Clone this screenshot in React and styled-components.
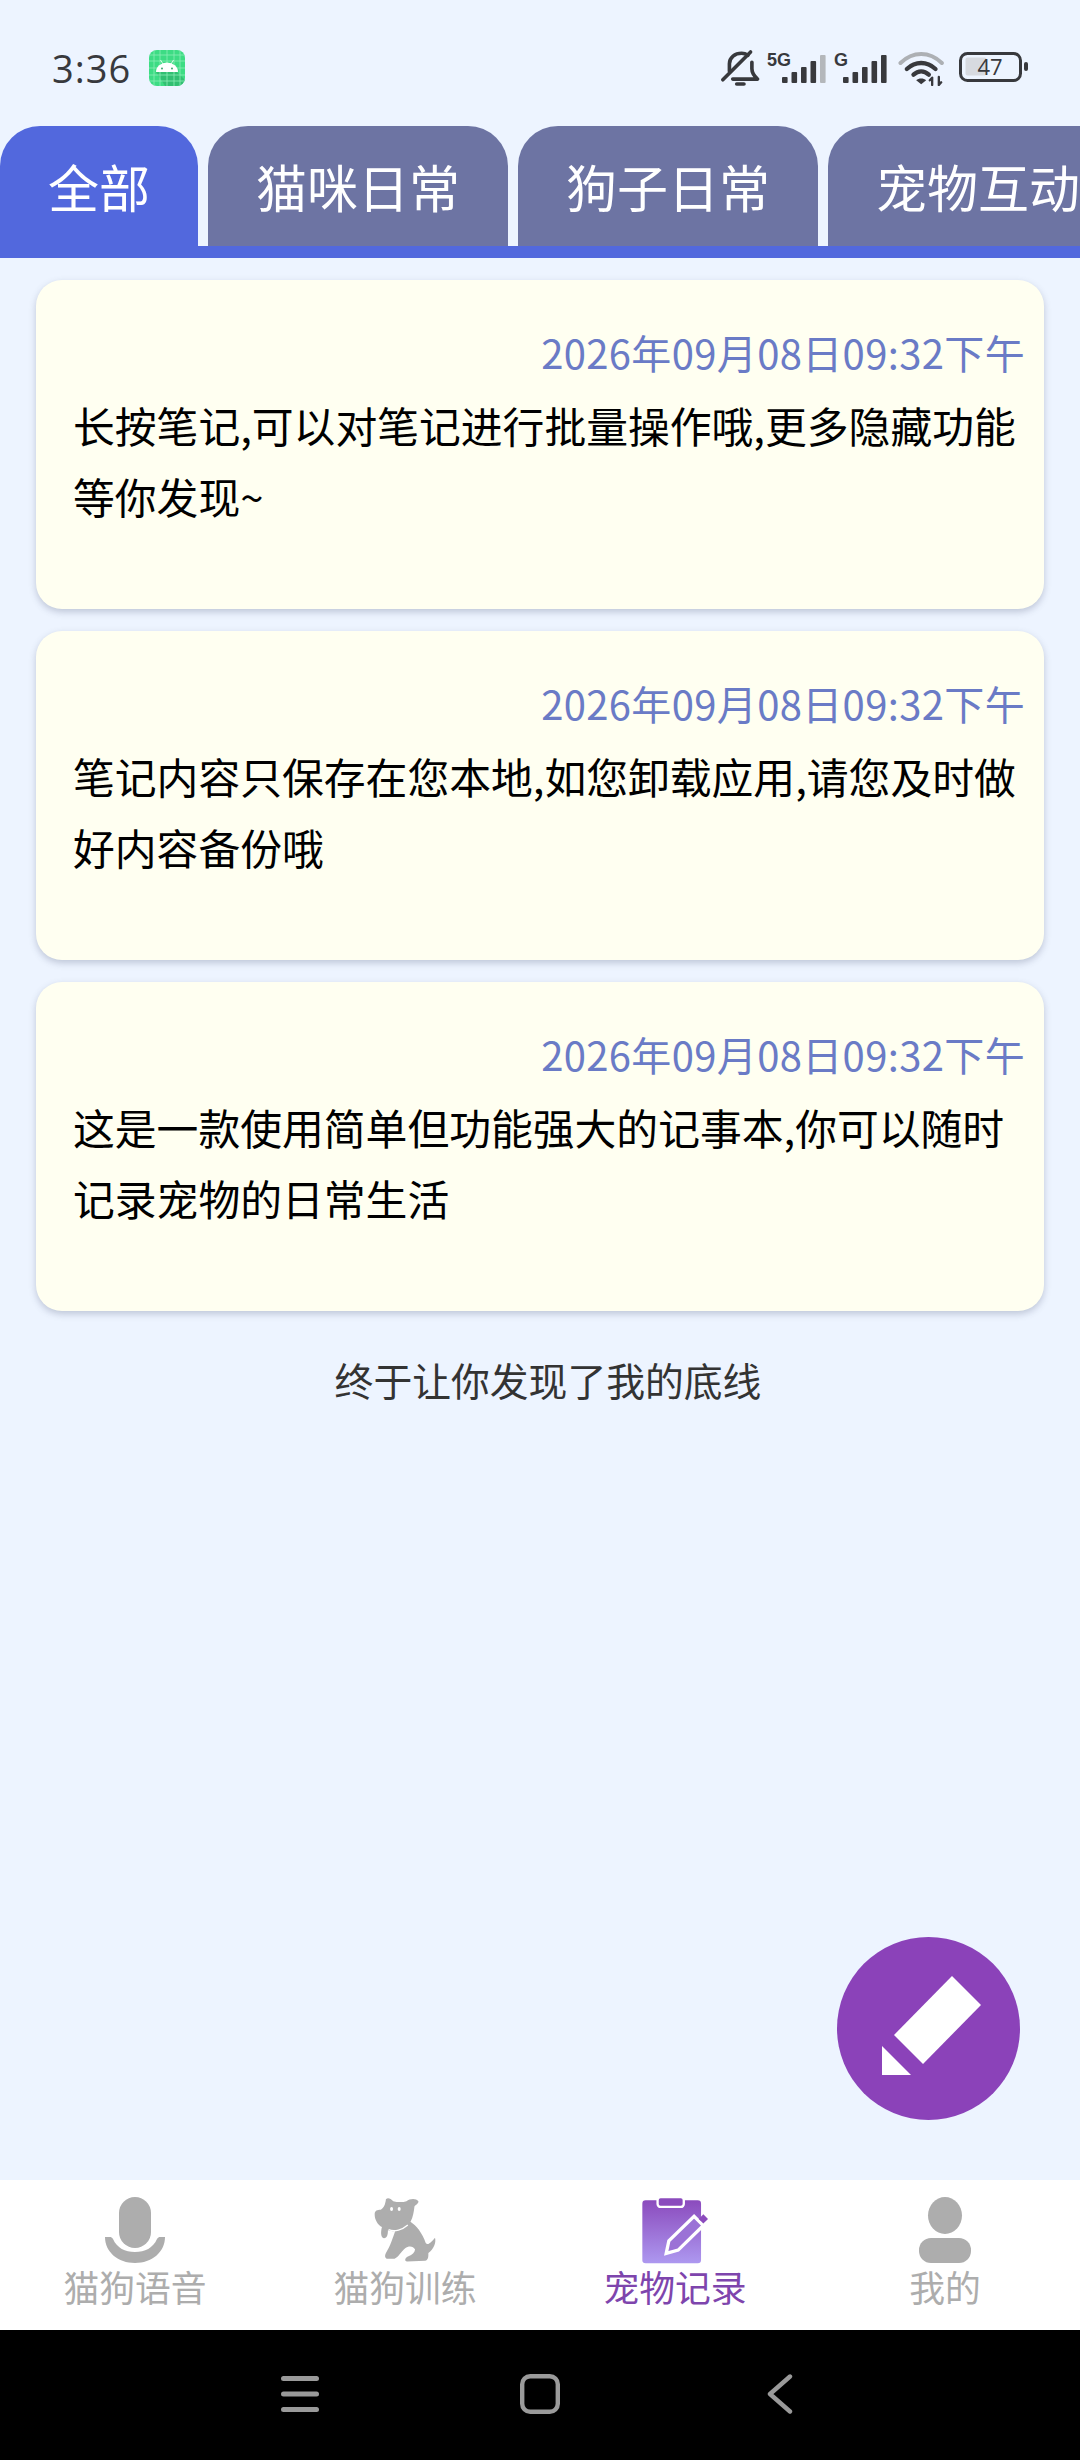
import React from 'react';
import styled, {createGlobalStyle} from 'styled-components';

const GlobalStyle = createGlobalStyle`
    html, body {
        margin: 0;
        padding: 0;
        background: #edf4ff;
    }
    * {
        box-sizing: border-box;
    }
`;

const Screen = styled.div`
    position: relative;
    width: 1080px;
    height: 2460px;
    display: flex;
    flex-direction: column;
    overflow: hidden;
    background: #edf4ff;
    font-family: "Noto Sans CJK SC", "Noto Sans", sans-serif;
`;

// status bar
const StatusBar = styled.div`
    height: 126px;
    flex: none;
    display: flex;
    align-items: center;
    justify-content: space-between;
    padding: 10px 51px 0 52px;
`;
const StatusLeft = styled.div`
    display: flex;
    align-items: center;
    gap: 18px;
`;
const Clock = styled.span`
    font-family: "Open Sans", sans-serif;
    font-size: 38px;
    font-weight: 500;
    line-height: 40px;
    color: #38393d;
    letter-spacing: 1px;
`;
const StatusRight = styled.div`
    display: flex;
    align-items: center;
    gap: 7px;
`;
const WifiSlot = styled.div`
    display: flex;
    margin: 0 7px 0 3px;
`;

// tabs
const TabStrip = styled.div`
    height: 132px;
    flex: none;
    display: flex;
    gap: 10px;
    overflow: hidden;
    border-bottom: 12px solid #5268dd;
`;
const Tab = styled.div`
    flex: none;
    width: ${props => props.$active ? '198px' : '300px'};
    height: 120px;
    display: flex;
    align-items: center;
    justify-content: center;
    border-radius: 40px 40px 0 0;
    font-size: 51px;
    color: #fff;
    white-space: nowrap;
    background: ${props => props.$active ? '#5268dd' : '#6d74a3'};
`;

// note list
const Content = styled.div`
    flex: 1;
    padding: 22px 36px 0;
    display: flex;
    flex-direction: column;
    gap: 22px;
`;
const NoteCard = styled.div`
    height: 329px;
    padding: 47px 19px 0 37px;
    background: #fffff1;
    border-radius: 26px;
    box-shadow: 0 3px 7px rgba(70, 80, 110, 0.28);
`;
const NoteDate = styled.div`
    text-align: right;
    font-size: 40px;
    line-height: 50px;
    letter-spacing: 0.35px;
    color: #6a7bc6;
    white-space: nowrap;
`;
const NoteText = styled.div`
    margin-top: 13px;
    font-size: 41.8px;
    line-height: 71px;
    color: #000;
`;
const EndLine = styled.div`
    padding: 11px 0 0 16px;
    text-align: center;
    font-size: 38.8px;
    line-height: 70px;
    color: #333;
`;

const Fab = styled.div`
    position: absolute;
    left: 837px;
    top: 1937px;
    width: 183px;
    height: 183px;
    border-radius: 50%;
    background: #8b42b9;
    display: flex;
`;

// bottom navigation
const BottomNav = styled.div`
    height: 150px;
    flex: none;
    display: grid;
    grid-template-columns: repeat(4, 1fr);
    background: #fff;
`;
const NavItem = styled.div`
    display: flex;
    flex-direction: column;
    align-items: center;
    padding-top: 16px;
`;
const NavIcon = styled.div`
    height: 68px;
    display: flex;
    align-items: center;
    justify-content: center;
`;
const NavLabel = styled.div`
    margin-top: 1px;
    font-size: 35.8px;
    line-height: 42px;
    color: ${props => props.$active ? '#7e45ad' : '#adadad'};
`;

const SystemBar = styled.div`
    height: 130px;
    flex: none;
    background: #000;
    display: flex;
    align-items: center;
    padding: 0 0 3px 281px;
    gap: 201px;
`;

const BellOff = () => (
    <svg width="40" height="38" viewBox="20 15 120 115" fill="none" stroke="#38393d" strokeWidth="11" strokeLinecap="round" strokeLinejoin="round">
        <path d="M48 82V60C48 40 65 28 85 28C92 28 98 30 104 34" />
        <path d="M116 55V75C116 88 124 98 133 106H58" />
        <path d="M28 108L112 24" />
        <path d="M70 121H92" />
    </svg>
);

const Signal = ({label, labelWidth, bars, dimLast}) => (
    <svg width={labelWidth + 45} height="36" viewBox={`0 0 ${labelWidth + 45} 36`}>
        <text x="0" y="16" fontSize="18" fontWeight="700" fill="#38393d" fontFamily="'Liberation Sans', sans-serif">{label}</text>
        {bars.map((h, i) => (
            <rect
                key={i}
                x={labelWidth + i * 9.5}
                y={33 - h}
                width="5.6"
                height={h}
                rx="1"
                fill={dimLast && i === bars.length - 1 ? '#b4b7bb' : '#38393d'}
            />
        ))}
    </svg>
);

const Wifi = () => (
    <svg width="47" height="35" viewBox="26 22 140 105" fill="none" strokeLinecap="round">
        <path d="M33 58C70 22 120 22 157 58" stroke="#adb0b4" strokeWidth="12" />
        <path d="M52 76C78 52 112 52 138 76" stroke="#38393d" strokeWidth="13" />
        <path d="M72 93C86 80 104 80 118 93" stroke="#38393d" strokeWidth="13" />
        <path d="M80 110C88 103 102 103 110 110L95 122Z" fill="#38393d" />
        <path d="M128 124V104M121 110L128 102M148 100V124M155 116L148 124" stroke="#38393d" strokeWidth="7" />
    </svg>
);

const Battery = () => (
    <svg width="70" height="32" viewBox="0 0 70 32">
        <rect x="1.5" y="1.5" width="60" height="27" rx="7" fill="none" stroke="#38393d" strokeWidth="3" />
        <rect x="6.500" y="5.500" width="21" height="18" rx="2" fill="#d7dae0" />
        <text x="31" y="23" textAnchor="middle" fontSize="22" fill="#38393d" fontFamily="'Open Sans', sans-serif">47</text>
        <rect x="65" y="10" width="4" height="9" rx="2" fill="#38393d" />
    </svg>
);

const AndroidBadge = () => (
    <svg width="36" height="36" viewBox="0 0 36 36">
        <defs>
            <clipPath id="badgeClip">
                <rect width="36" height="36" rx="8" />
            </clipPath>
        </defs>
        <g clipPath="url(#badgeClip)">
            <rect width="36" height="36" fill="#3ddc84" />
            <path d="M7 22H28L42 36V42H20Z" fill="#2fb56c" opacity="0.75" />
            <path d="M5 0V36M11 0V36M18 0V36M25 0V36M31 0V36M0 5H36M0 11H36M0 18H36M0 25H36M0 31H36" stroke="#8aedb6" strokeWidth="0.8" />
        </g>
        <path d="M7 22a11 9.500 0 0 1 22 0Z" fill="#fff" />
        <path d="M11.500 10l2.500 4M24.500 10l-2.500 4" stroke="#fff" strokeWidth="0.8" />
        <circle cx="13" cy="18.500" r="0.9" fill="#2a9d60" />
        <circle cx="23" cy="18.500" r="0.9" fill="#2a9d60" />
    </svg>
);

const MicIcon = () => (
    <svg width="60" height="66" viewBox="0 0 60 66">
        <rect x="14" y="0" width="32" height="51" rx="16" fill="#adadad" />
        <path d="M0 40h5c1 0 2 .5 3 2 4 9 12 13 22 13s18-4 22-13c1-1.500 2-2 3-2h5c0 15-13 26-30 26S0 55 0 40Z" fill="#adadad" />
    </svg>
);

const DogIcon = () => (
    <svg width="63" height="66" viewBox="42 22 190 198">
        <path fill="#adadad" d="M78 28C84 22 92 26 100 34C112 37 128 38 140 34C150 26 168 24 176 34C176 42 168 44 164 50C162 66 160 82 152 96C170 108 188 130 198 160C204 168 212 160 226 144C230 160 222 178 206 190C206 202 206 210 196 214L142 216C132 214 136 204 146 200C158 196 164 190 166 180C160 168 146 168 136 176C122 188 118 200 104 208L84 208C74 206 74 198 78 190C92 168 100 140 106 124C96 126 90 124 84 122C84 134 82 146 72 146C62 144 62 126 66 112C54 106 44 90 44 74C44 62 52 60 62 60C72 54 76 44 78 28Z" />
        <ellipse cx="95" cy="58" rx="4.500" ry="6" fill="#fff" />
        <ellipse cx="118" cy="58" rx="4.500" ry="6" fill="#fff" />
        <path d="M86 120C104 128 128 120 144 106" stroke="#fff" strokeWidth="4" fill="none" />
    </svg>
);

const NoteIcon = () => (
    <svg width="67" height="67" viewBox="38 18 200 202">
        <defs>
            <linearGradient id="noteFill" x1="0" y1="0" x2="0" y2="1">
                <stop offset="0" stopColor="#8b4bbd" />
                <stop offset="1" stopColor="#ad98f0" />
            </linearGradient>
        </defs>
        <rect x="38" y="28" width="177" height="190" rx="10" fill="url(#noteFill)" />
        <rect x="84" y="18" width="79" height="30" rx="9" fill="#8b4bbd" stroke="#fff" strokeWidth="7" />
        <path d="M110 188L118 150L194 76L222 104L146 178Z" fill="#9b72d6" stroke="#fff" strokeWidth="10" />
        <path d="M208 84L222 70L236 84L222 98Z" fill="#8b4bbd" />
    </svg>
);

const PersonIcon = () => (
    <svg width="52" height="66" viewBox="0 0 52 66">
        <ellipse cx="26" cy="18.500" rx="17" ry="18.500" fill="#adadad" />
        <rect x="0" y="41" width="52" height="25" rx="12" fill="#adadad" />
    </svg>
);

const MenuGlyph = () => (
    <svg width="38" height="36" viewBox="0 0 38 36" fill="#9a9a9a">
        <rect x="0" y="0" width="38" height="5" rx="2.500" />
        <rect x="0" y="15.500" width="38" height="5" rx="2.500" />
        <rect x="0" y="31" width="38" height="5" rx="2.500" />
    </svg>
);
const HomeGlyph = () => (
    <svg width="40" height="40" viewBox="0 0 40 40" fill="none" stroke="#9a9a9a" strokeWidth="4.400">
        <rect x="2.200" y="2.200" width="35.600" height="35.600" rx="8" />
    </svg>
);
const BackGlyph = () => (
    <svg width="32" height="40" viewBox="-6 0 32 40" fill="none" stroke="#9a9a9a" strokeWidth="4.400" strokeLinecap="round" strokeLinejoin="round">
        <path d="M23 2.500L3 20L23 37.500" />
    </svg>
);

const notes = [
    '长按笔记,可以对笔记进行批量操作哦,更多隐藏功能等你发现~',
    '笔记内容只保存在您本地,如您卸载应用,请您及时做好内容备份哦',
    '这是一款使用简单但功能强大的记事本,你可以随时记录宠物的日常生活',
];
const tabs = ['全部', '猫咪日常', '狗子日常', '宠物互动'];
const navItems = [
    {label: '猫狗语音', icon: <MicIcon />},
    {label: '猫狗训练', icon: <DogIcon />},
    {label: '宠物记录', icon: <NoteIcon />, active: true},
    {label: '我的', icon: <PersonIcon />},
];

export default function App() {
    return (
        <Screen>
            <GlobalStyle />
            <StatusBar>
                <StatusLeft>
                    <Clock>3:36</Clock>
                    <AndroidBadge />
                </StatusLeft>
                <StatusRight>
                    <BellOff />
                    <Signal label="5G" labelWidth={15} bars={[6, 11, 16, 22, 28]} dimLast />
                    <Signal label="G" labelWidth={9} bars={[6, 11, 16, 22, 28]} />
                    <WifiSlot><Wifi /></WifiSlot>
                    <Battery />
                </StatusRight>
            </StatusBar>
            <TabStrip>
                {tabs.map((t, i) => (
                    <Tab key={t} $active={i === 0}>{t}</Tab>
                ))}
            </TabStrip>
            <Content>
                {notes.map(n => (
                    <NoteCard key={n}>
                        <NoteDate>2026年09月08日09:32下午</NoteDate>
                        <NoteText>{n}</NoteText>
                    </NoteCard>
                ))}
                <EndLine>终于让你发现了我的底线</EndLine>
            </Content>
            <Fab>
                <svg width="183" height="183" viewBox="0 0 183 183" fill="#fff">
                    <path d="M115 39L144 68L86 127L57 98Z" />
                    <path d="M45 109L74 138H45Z" />
                </svg>
            </Fab>
            <BottomNav>
                {navItems.map(item => (
                    <NavItem key={item.label}>
                        <NavIcon>{item.icon}</NavIcon>
                        <NavLabel $active={item.active}>{item.label}</NavLabel>
                    </NavItem>
                ))}
            </BottomNav>
            <SystemBar>
                <MenuGlyph />
                <HomeGlyph />
                <BackGlyph />
            </SystemBar>
        </Screen>
    );
}
